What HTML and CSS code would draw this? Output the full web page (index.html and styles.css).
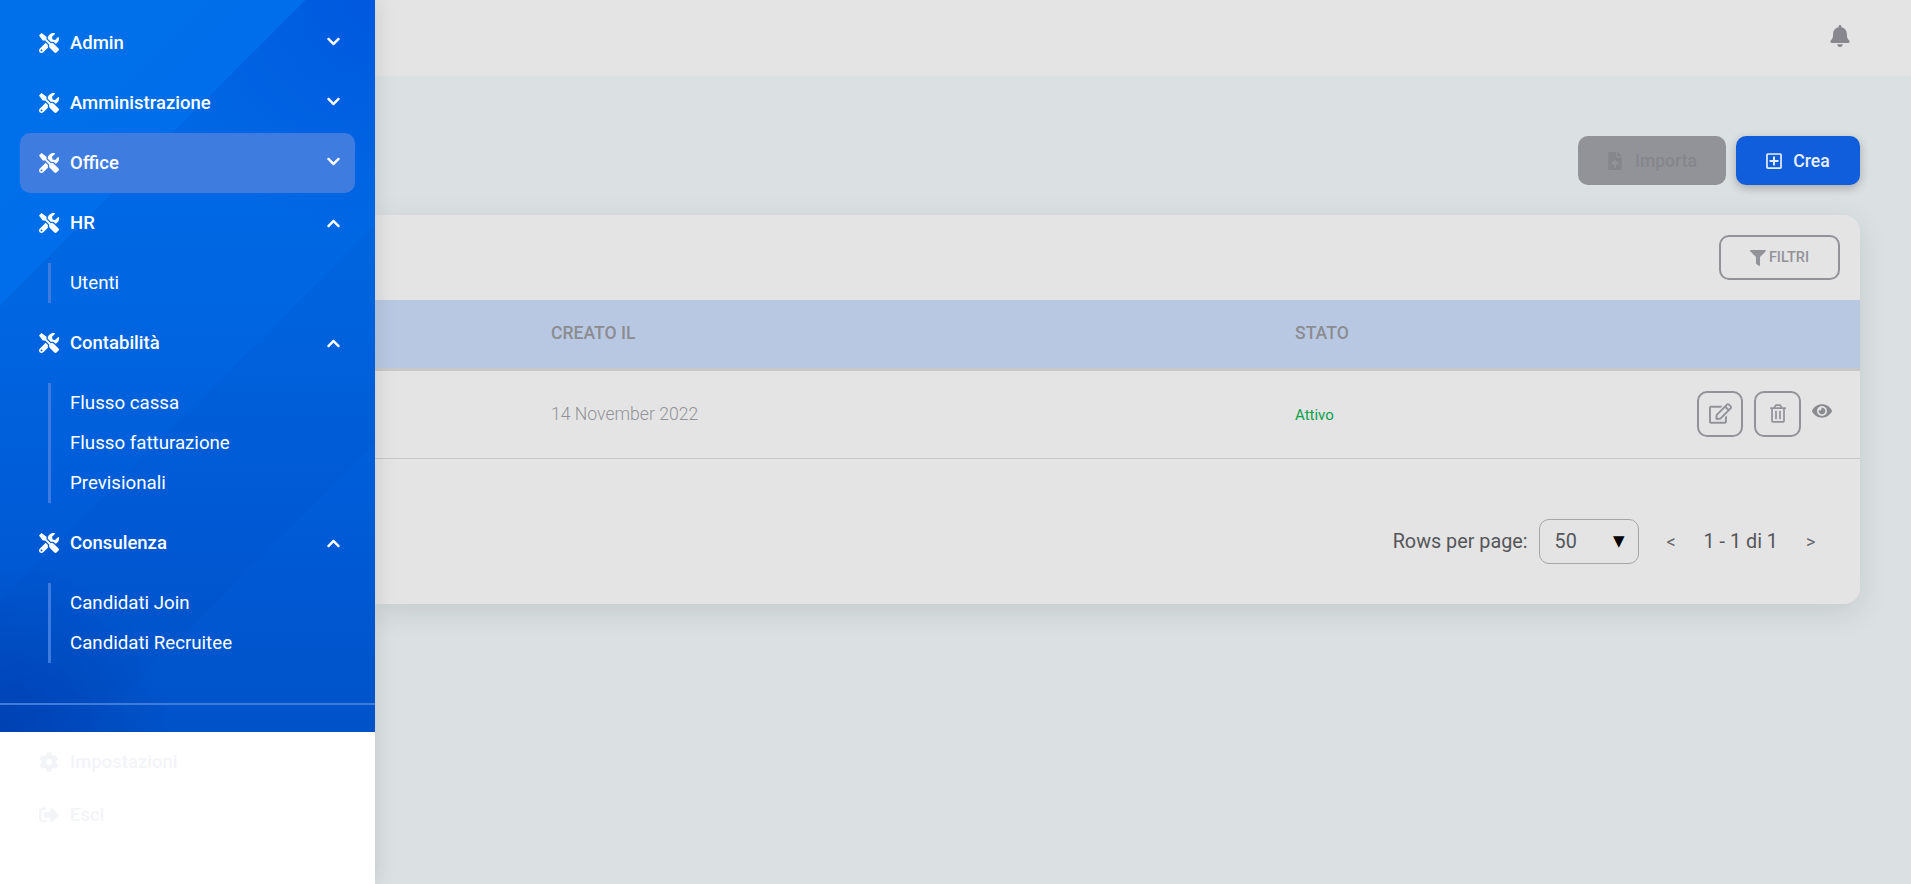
FILE: index.html
```html
<!DOCTYPE html>
<html lang="it">
<head>
  <meta charset="UTF-8">
  <meta name="viewport" content="width=device-width, initial-scale=1.0">
  <title>Utenti</title>
  <link rel="stylesheet" href="styles.css">
</head>
<body>

  <svg class="icon-defs" xmlns="http://www.w3.org/2000/svg">
    <symbol id="i-tools" viewBox="0 0 512 512"><path d="M501.1 395.7L384 278.6c-23.1-23.1-57.6-27.6-85.4-13.9L192 158.1V96L64 0 0 64l96 128h62.1l106.6 106.6c-13.6 27.8-9.2 62.3 13.9 85.4l117.1 117.1c14.6 14.6 38.2 14.6 52.7 0l52.7-52.7c14.5-14.6 14.5-38.2 0-52.7zM331.7 225c28.3 0 54.9 11 74.9 31l19.4 19.4c15.8-6.9 30.8-16.5 43.8-29.5 37.1-37.1 49.7-89.3 37.9-136.7-2.2-9-13.5-12.1-20.1-5.5l-74.4 74.4-67.9-11.3L334 98.9l74.4-74.4c6.6-6.6 3.4-17.9-5.7-20.2-47.4-11.7-99.6.9-136.6 37.9-28.5 28.5-41.9 66.1-41.2 103.6l82.1 82.1c8.1-1.9 16.5-2.9 24.7-2.9zm-103.9 82l-56.7-56.7L18.7 402.8c-25 25-25 65.5 0 90.5s65.5 25 90.5 0l123.6-123.6c-7.6-19.9-9.9-41.6-5-62.7zM64 472c-13.2 0-24-10.8-24-24 0-13.3 10.7-24 24-24s24 10.7 24 24c0 13.2-10.7 24-24 24z"/></symbol>
    <symbol id="i-down" viewBox="0 0 448 512"><path d="M207.029 381.476L12.686 187.132c-9.373-9.373-9.373-24.569 0-33.941l22.667-22.667c9.357-9.357 24.522-9.375 33.901-.04L224 284.505l154.745-154.021c9.379-9.335 24.544-9.317 33.901.04l22.667 22.667c9.373 9.373 9.373 24.569 0 33.941L240.971 381.476c-9.373 9.372-24.569 9.372-33.942 0z"/></symbol>
    <symbol id="i-up" viewBox="0 0 448 512"><path d="M240.971 130.524l194.343 194.343c9.373 9.373 9.373 24.569 0 33.941l-22.667 22.667c-9.357 9.357-24.522 9.375-33.901.04L224 227.495 69.255 381.516c-9.379 9.335-24.544 9.317-33.901-.04l-22.667-22.667c-9.373-9.373-9.373-24.569 0-33.941L207.03 130.525c9.372-9.373 24.568-9.373 33.941-.001z"/></symbol>
    <symbol id="i-cog" viewBox="0 0 512 512"><path d="M487.4 315.7l-42.6-24.6c4.3-23.2 4.3-47 0-70.2l42.6-24.6c4.9-2.8 7.1-8.6 5.5-14-11.1-35.6-30-67.8-54.7-94.6-3.8-4.1-10-5.1-14.8-2.3L380.8 110c-17.9-15.4-38.5-27.3-60.8-35.1V25.8c0-5.6-3.9-10.5-9.4-11.7-36.7-8.2-74.3-7.8-109.2 0-5.5 1.2-9.4 6.1-9.4 11.7V75c-22.2 7.9-42.8 19.8-60.8 35.1L88.7 85.5c-4.9-2.8-11-1.9-14.8 2.3-24.7 26.7-43.6 58.9-54.7 94.6-1.7 5.4.6 11.2 5.5 14L67.3 221c-4.3 23.2-4.3 47 0 70.2l-42.6 24.6c-4.9 2.8-7.1 8.6-5.5 14 11.1 35.6 30 67.8 54.7 94.6 3.8 4.1 10 5.1 14.8 2.3l42.6-24.6c17.9 15.4 38.5 27.3 60.8 35.1v49.2c0 5.6 3.9 10.5 9.4 11.7 36.7 8.2 74.3 7.8 109.2 0 5.5-1.2 9.4-6.1 9.4-11.7v-49.2c22.2-7.9 42.8-19.8 60.8-35.1l42.6 24.6c4.9 2.8 11 1.9 14.8-2.3 24.7-26.7 43.6-58.9 54.7-94.6 1.5-5.5-.7-11.3-5.6-14.1zM256 336c-44.1 0-80-35.9-80-80s35.9-80 80-80 80 35.9 80 80-35.9 80-80 80z"/></symbol>
    <symbol id="i-out" viewBox="0 0 512 512"><path d="M497 273L329 441c-15 15-41 4.5-41-17v-96H152c-13.3 0-24-10.7-24-24v-96c0-13.3 10.7-24 24-24h136V88c0-21.4 25.9-32 41-17l168 168c9.3 9.4 9.3 24.6 0 34zM192 436v-40c0-6.6-5.4-12-12-12H96c-17.7 0-32-14.3-32-32V160c0-17.7 14.3-32 32-32h84c6.6 0 12-5.4 12-12V76c0-6.6-5.4-12-12-12H96c-53 0-96 43-96 96v192c0 53 43 96 96 96h84c6.6 0 12-5.4 12-12z"/></symbol>
    <symbol id="i-bell" viewBox="0 0 448 512"><path d="M224 512c35.32 0 63.97-28.65 63.97-64H160.03c0 35.35 28.65 64 63.97 64zm215.39-149.71c-19.32-20.76-55.47-51.99-55.47-154.29 0-77.7-54.48-139.9-127.94-155.16V32c0-17.67-14.32-32-31.98-32s-31.98 14.33-31.98 32v20.84C118.56 68.1 64.08 130.3 64.08 208c0 102.3-36.15 133.53-55.47 154.29-6 6.45-8.66 14.16-8.61 21.71.11 16.4 12.98 32 32.1 32h383.8c19.12 0 32-15.6 32.1-32 .05-7.55-2.61-15.27-8.61-21.71z"/></symbol>
    <symbol id="i-file" viewBox="0 0 384 512"><path d="M224 136V0H24C10.7 0 0 10.7 0 24v464c0 13.3 10.7 24 24 24h336c13.3 0 24-10.7 24-24V160H248c-13.2 0-24-10.8-24-24zm65.18 216.01H224v80c0 8.84-7.16 16-16 16h-32c-8.84 0-16-7.16-16-16v-80H94.82c-14.28 0-21.41-17.29-11.27-27.36l96.42-95.7c6.65-6.61 17.39-6.61 24.04 0l96.42 95.7c10.15 10.07 3.03 27.36-11.25 27.36zM377 105L279.1 7c-4.5-4.5-10.6-7-17-7H256v128h128v-6.1c0-6.3-2.5-12.4-7-16.9z"/></symbol>
    <symbol id="i-plus" viewBox="0 0 448 512"><path d="M352 240v32c0 6.6-5.4 12-12 12h-88v88c0 6.6-5.4 12-12 12h-32c-6.6 0-12-5.4-12-12v-88h-88c-6.6 0-12-5.4-12-12v-32c0-6.6 5.4-12 12-12h88v-88c0-6.6 5.4-12 12-12h32c6.6 0 12 5.4 12 12v88h88c6.6 0 12 5.4 12 12zm96-160v352c0 26.5-21.5 48-48 48H48c-26.5 0-48-21.5-48-48V80c0-26.5 21.5-48 48-48h352c26.5 0 48 21.5 48 48zm-48 346V86c0-3.3-2.7-6-6-6H54c-3.3 0-6 2.7-6 6v340c0 3.3 2.7 6 6 6h340c3.3 0 6-2.7 6-6z"/></symbol>
    <symbol id="i-filter" viewBox="0 0 512 512"><path d="M487.976 0H24.028C2.71 0-8.047 25.866 7.058 40.971L192 225.941V432c0 7.831 3.821 15.17 10.237 19.662l80 55.98C298.02 518.69 320 507.493 320 487.98V225.941l184.947-184.97C520.021 25.896 509.338 0 487.976 0z"/></symbol>
    <symbol id="i-edit" viewBox="0 0 576 512"><path d="M402.3 344.9l32-32c5-5 13.7-1.5 13.7 5.7V464c0 26.5-21.5 48-48 48H48c-26.5 0-48-21.5-48-48V112c0-26.5 21.5-48 48-48h273.5c7.1 0 10.7 8.6 5.7 13.7l-32 32c-1.5 1.5-3.5 2.3-5.7 2.3H48v352h352V350.5c0-2.1.8-4.1 2.3-5.6zm156.6-201.8L296.3 405.7l-90.4 10c-26.2 2.9-48.5-19.2-45.6-45.6l10-90.4L432.9 17.1c22.9-22.9 59.9-22.9 82.7 0l43.2 43.2c22.9 22.9 22.9 60 .1 82.8zM460.1 174L402 115.9 216.2 301.8l-7.3 65.3 65.3-7.3L460.1 174zm64.8-79.7l-43.2-43.2c-4.1-4.1-10.8-4.1-14.8 0L436 82l58.1 58.1 30.9-30.9c4-4.2 4-10.8-.1-14.9z"/></symbol>
    <symbol id="i-trash" viewBox="0 0 448 512"><path d="M268 416h24a12 12 0 0 0 12-12V188a12 12 0 0 0-12-12h-24a12 12 0 0 0-12 12v216a12 12 0 0 0 12 12zM432 80h-82.41l-34-56.7A48 48 0 0 0 274.41 0H173.59a48 48 0 0 0-41.16 23.3L98.41 80H16A16 16 0 0 0 0 96v16a16 16 0 0 0 16 16h16v336a48 48 0 0 0 48 48h288a48 48 0 0 0 48-48V128h16a16 16 0 0 0 16-16V96a16 16 0 0 0-16-16zM171.84 50.91A6 6 0 0 1 177 48h94a6 6 0 0 1 5.15 2.91L293.61 80H154.39zM368 464H80V128h288zm-212-48h24a12 12 0 0 0 12-12V188a12 12 0 0 0-12-12h-24a12 12 0 0 0-12 12v216a12 12 0 0 0 12 12z"/></symbol>
    <symbol id="i-eye" viewBox="0 0 576 512"><path d="M572.52 241.4C518.29 135.59 410.93 64 288 64S57.68 135.64 3.48 241.41a32.35 32.35 0 0 0 0 29.19C57.71 376.41 165.07 448 288 448s230.32-71.64 284.52-177.41a32.35 32.35 0 0 0 0-29.19zM288 400a144 144 0 1 1 144-144 143.93 143.93 0 0 1-144 144zm0-240a95.31 95.31 0 0 0-25.31 3.79 47.85 47.85 0 0 1-66.9 66.9A95.78 95.78 0 1 0 288 160z"/></symbol>
  </svg>

  <div class="layout">
    <aside class="sidebar">
      <nav class="side-menu">
        <a class="menu-item"><svg class="menu-icon"><use href="#i-tools"/></svg><span class="menu-label">Admin</span><svg class="chevron"><use href="#i-down"/></svg></a>
        <a class="menu-item"><svg class="menu-icon"><use href="#i-tools"/></svg><span class="menu-label">Amministrazione</span><svg class="chevron"><use href="#i-down"/></svg></a>
        <a class="menu-item active"><svg class="menu-icon"><use href="#i-tools"/></svg><span class="menu-label">Office</span><svg class="chevron"><use href="#i-down"/></svg></a>
        <a class="menu-item"><svg class="menu-icon"><use href="#i-tools"/></svg><span class="menu-label">HR</span><svg class="chevron chevron-up"><use href="#i-up"/></svg></a>
        <div class="submenu">
          <a class="sub-item">Utenti</a>
        </div>
        <a class="menu-item"><svg class="menu-icon"><use href="#i-tools"/></svg><span class="menu-label">Contabilità</span><svg class="chevron chevron-up"><use href="#i-up"/></svg></a>
        <div class="submenu">
          <a class="sub-item">Flusso cassa</a>
          <a class="sub-item">Flusso fatturazione</a>
          <a class="sub-item">Previsionali</a>
        </div>
        <a class="menu-item"><svg class="menu-icon"><use href="#i-tools"/></svg><span class="menu-label">Consulenza</span><svg class="chevron chevron-up"><use href="#i-up"/></svg></a>
        <div class="submenu">
          <a class="sub-item">Candidati Join</a>
          <a class="sub-item">Candidati Recruitee</a>
        </div>
      </nav>
      <div class="side-footer">
        <a class="foot-item"><svg class="menu-icon"><use href="#i-cog"/></svg><span class="menu-label">Impostazioni</span></a>
        <a class="foot-item"><svg class="menu-icon"><use href="#i-out"/></svg><span class="menu-label">Esci</span></a>
      </div>
    </aside>

    <div class="main">
      <header class="topbar">
        <svg class="bell"><use href="#i-bell"/></svg>
      </header>

      <div class="content">
        <div class="actions">
          <button class="btn btn-import"><svg class="btn-icon file-icon"><use href="#i-file"/></svg>Importa</button>
          <button class="btn btn-create"><svg class="btn-icon"><use href="#i-plus"/></svg>Crea</button>
        </div>

        <section class="card">
          <div class="card-tools">
            <button class="btn-filter"><svg class="filter-icon"><use href="#i-filter"/></svg>FILTRI</button>
          </div>
          <div class="table-row table-head">
            <span></span>
            <span>CREATO IL</span>
            <span>STATO</span>
          </div>
          <div class="table-row table-body">
            <span></span>
            <span class="cell-date">14 November 2022</span>
            <span class="cell-status">Attivo</span>
            <div class="row-actions">
              <button class="btn-square"><svg class="edit-icon"><use href="#i-edit"/></svg></button>
              <button class="btn-square btn-wide"><svg class="trash-icon"><use href="#i-trash"/></svg></button>
              <svg class="eye-icon"><use href="#i-eye"/></svg>
            </div>
          </div>
          <div class="pagination">
            <span>Rows per page:</span>
            <div class="page-select"><span>50</span><span class="select-arrow">▼</span></div>
            <span class="page-arrow">&lt;</span>
            <span class="page-count">1 - 1 di 1</span>
            <span class="page-arrow">&gt;</span>
          </div>
        </section>
      </div>
    </div>
  </div>

</body>
</html>
```

FILE: styles.css
```css
* {
  box-sizing: border-box;
}

body {
  margin: 0;
  font-family: Roboto, "Liberation Sans", sans-serif;
  background-color: #dbe0e3;
  color: #929399;
}

.icon-defs {
  display: none;
}

svg {
  fill: currentColor;
  display: block;
  flex-shrink: 0;
}

button {
  font-family: inherit;
  cursor: pointer;
  padding: 0;
}

.layout {
  display: flex;
  height: 884px;
  overflow: hidden;
}

/* Sidebar */
.sidebar {
  position: relative;
  z-index: 2;
  width: 375px;
  flex-shrink: 0;
  display: flex;
  flex-direction: column;
  background: #fff;
  box-shadow: 0 0 20px rgba(0, 0, 0, 0.12);
}

.side-menu {
  height: 732px;
  padding: 13px 20px 0;
  color: #fff;
  background:
    linear-gradient(#0000 703px, #3d7bdc 703px, #3d7bdc 705px, #0000 705px),
    linear-gradient(135deg, #0070ea 0, #006eea 216px, #0000 216px),
    linear-gradient(135deg, #0000 424px, rgba(0, 60, 170, 0.07) 425px, rgba(0, 60, 170, 0.07) 578px, #0000 579px),
    radial-gradient(circle at 0 732px, rgba(0, 40, 150, 0.4), #0000 170px),
    radial-gradient(circle at 375px 0, #0058de, #0000 230px),
    linear-gradient(to bottom, #0068e4 180px, #0066e2 300px, #005cd8 500px, #0052c8 100%);
}

.menu-item {
  height: 60px;
  display: flex;
  align-items: center;
  padding: 0 15px 0 19px;
  border-radius: 10px;
  font-size: 18.5px;
  font-weight: 500;
}

.menu-item.active {
  background-color: #3e7ce0;
}

.menu-icon {
  width: 20px;
  height: 20px;
  margin-right: 11px;
}

.menu-label {
  flex: 1;
}

.chevron {
  width: 13px;
  height: 15px;
  margin-top: -3px;
}

.chevron-up {
  margin-top: 0;
}

.submenu {
  margin: 10px 0 10px 28px;
  border-left: 3px solid #3d7be0;
  display: flex;
  flex-direction: column;
}

.sub-item {
  height: 40px;
  display: flex;
  align-items: center;
  padding-left: 19px;
  font-size: 18.7px;
}

.side-footer {
  flex: 1;
  padding: 3px 39px 0;
  color: #f3f4f8;
}

.foot-item {
  height: 53px;
  display: flex;
  align-items: center;
  font-size: 18.5px;
  font-weight: 500;
}

/* Main */
.main {
  flex: 1;
  min-width: 0;
  display: flex;
  flex-direction: column;
}

.topbar {
  height: 76px;
  flex-shrink: 0;
  background-color: #e4e4e4;
  display: flex;
  justify-content: flex-end;
  align-items: center;
  padding-right: 61px;
}

.bell {
  width: 20px;
  height: 22px;
  margin-bottom: 5px;
  color: #87878d;
}

.content {
  padding: 60px 51px 0 0;
}

.actions {
  display: flex;
  justify-content: flex-end;
  gap: 10px;
  margin-bottom: 30px;
}

.btn {
  height: 49px;
  border: none;
  border-radius: 10px;
  font-size: 17.6px;
  font-weight: 500;
  display: flex;
  align-items: center;
  justify-content: center;
}

.btn-import {
  width: 148px;
  background-color: #929399;
  color: #85868b;
}

.btn-create {
  width: 124px;
  background-color: #105edb;
  color: #e9effa;
  box-shadow: 0 3px 10px rgba(0, 0, 0, 0.25);
}

.btn-icon {
  width: 16px;
  height: 18px;
  margin-right: 11px;
}

.file-icon {
  width: 14px;
  height: 18px;
  margin: 0 13px 0 1px;
}

/* Card */
.card {
  background-color: #e4e4e4;
  border-radius: 0 16px 16px 0;
  box-shadow: 0 8px 30px rgba(0, 0, 0, 0.1);
}

.card-tools {
  height: 85px;
  padding: 20px 20px 0 0;
  display: flex;
  justify-content: flex-end;
  align-items: flex-start;
}

.btn-filter {
  width: 121px;
  height: 45px;
  background: transparent;
  border: 2px solid #929399;
  border-radius: 10px;
  color: #929399;
  font-size: 14.5px;
  font-weight: 500;
  display: flex;
  align-items: center;
  justify-content: center;
  gap: 3px;
}

.filter-icon {
  width: 16px;
  height: 16px;
}

.table-row {
  display: grid;
  grid-template-columns: 176px 744px 1fr auto;
  align-items: center;
}

.table-head {
  height: 71px;
  padding-bottom: 2px;
  background-color: #b9c8e2;
  border-bottom: 3px solid #c8c8c8;
  color: #8b8c91;
  font-size: 17.6px;
  font-weight: 500;
}

.table-body {
  height: 88px;
  padding: 0 28px 2px 0;
  border-bottom: 1px solid #c8c8c8;
}

.cell-date {
  font-size: 17.6px;
  font-weight: 300;
}

.cell-status {
  font-size: 15px;
  color: #0ca04a;
  padding-top: 2px;
}

.row-actions {
  display: flex;
  align-items: center;
  gap: 11px;
}

.btn-square {
  width: 46px;
  height: 46px;
  background: transparent;
  border: 2px solid #929399;
  border-radius: 10px;
  color: #929399;
  display: flex;
  align-items: center;
  justify-content: center;
}

.btn-wide {
  width: 47px;
}

.edit-icon {
  width: 23px;
  height: 21px;
}

.trash-icon {
  width: 16px;
  height: 19px;
}

.eye-icon {
  width: 20px;
  height: 18px;
  margin-bottom: 5px;
  color: #8a8b90;
}

/* Paginazione */
.pagination {
  height: 145px;
  display: flex;
  justify-content: flex-end;
  align-items: center;
  padding: 19px 45px 0 0;
  font-size: 19.8px;
  color: #55565a;
}

.page-select {
  width: 100px;
  height: 45px;
  margin: 0 28px 0 11px;
  padding: 0 13px 0 15px;
  border: 1px solid #a6a6a8;
  border-radius: 10px;
  display: flex;
  align-items: center;
  justify-content: space-between;
}

.select-arrow {
  font-family: "DejaVu Sans", sans-serif;
  font-size: 15px;
  color: #000;
}

.page-arrow {
  font-size: 18px;
  width: 9px;
  color: #66676b;
}

.page-count {
  margin: 0 28px;
}
```
